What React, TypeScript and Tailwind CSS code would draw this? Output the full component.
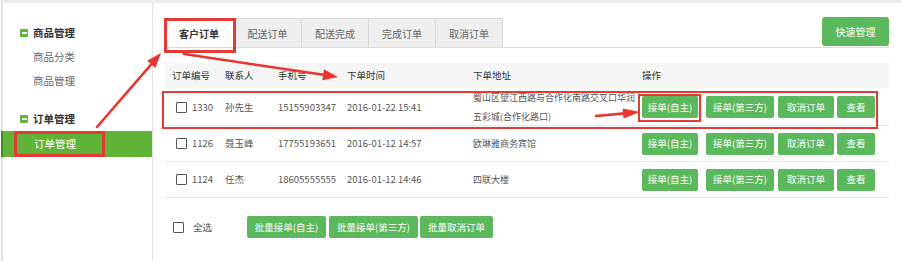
import React from 'react';

const RED = '#e8352e';

function Arrow({ x1, y1, x2, y2, head = 15, w = 11 }: { x1: number; y1: number; x2: number; y2: number; head?: number; w?: number }) {
  const dx = x2 - x1;
  const dy = y2 - y1;
  const L = Math.hypot(dx, dy);
  const ux = dx / L;
  const uy = dy / L;
  const bx = x2 - ux * head;
  const by = y2 - uy * head;
  const px = -uy;
  const py = ux;
  return (
    <g>
      <line x1={x1} y1={y1} x2={bx + ux * 2} y2={by + uy * 2} stroke={RED} strokeWidth={2.6} strokeLinecap="round" />
      <polygon
        points={`${x2},${y2} ${bx + (px * w) / 2},${by + (py * w) / 2} ${bx - (px * w) / 2},${by - (py * w) / 2}`}
        fill={RED}
      />
    </g>
  );
}

function Checkbox() {
  return <span className="block w-[11px] h-[11px] border border-[#555] bg-white rounded-[1px] shrink-0" />;
}

function GreenBtn({ children, w, className = '' }: { children: React.ReactNode; w: string; className?: string }) {
  return (
    <button
      className={`h-[22px] ${w} bg-[#5cb85c] text-white text-[9.5px] rounded-[2px] flex items-center justify-center shrink-0 ${className}`}
    >
      {children}
    </button>
  );
}

function GroupIcon() {
  return (
    <span className="w-[8px] h-[8px] bg-[#5fb336] rounded-[1px] flex items-center justify-center mr-[5px]">
      <span className="w-[5px] h-[1.5px] bg-white" />
    </span>
  );
}

type Row = { id: string; name: string; phone: string; time: string; addr: React.ReactNode; tall?: boolean; mark?: boolean };

const rows: Row[] = [
  {
    id: '1330',
    name: '孙先生',
    phone: '15155903347',
    time: '2016-01-22 15:41',
    addr: (
      <>
        蜀山区望江西路与合作化南路交叉口华润
        <br />
        五彩城(合作化路口)
      </>
    ),
    tall: true,
    mark: true,
  },
  { id: '1126', name: '聂玉峰', phone: '17755193651', time: '2016-01-12 14:57', addr: '欧琳雅商务宾馆' },
  { id: '1124', name: '任杰', phone: '18605555555', time: '2016-01-12 14:46', addr: '四联大楼' },
];

const cols = 'grid grid-cols-[53px_53px_69px_126px_169px_1fr] items-center';

export default function App() {
  return (
    <div className="relative w-[901px] h-[261px] bg-white overflow-hidden font-['Noto_Sans_CJK_SC','Noto_Sans',sans-serif] border-t-[3px] border-[#ebebeb] flex pl-[1px]">
      {/* Sidebar */}
      <aside className="w-[152px] shrink-0 border-l-2 border-r border-[#e3e3e3] pt-[18px] flex flex-col">
        <div className="h-[24px] flex items-center pl-[17px] text-[10.5px] font-bold text-[#333]">
          <GroupIcon />
          商品管理
        </div>
        <div className="h-[24px] flex items-center pl-[30px] text-[10.5px] text-[#666]">商品分类</div>
        <div className="h-[24px] flex items-center pl-[30px] text-[10.5px] text-[#666]">商品管理</div>
        <div className="h-[24px] mt-[14px] flex items-center pl-[17px] text-[10.5px] font-bold text-[#333]">
          <GroupIcon />
          订单管理
        </div>
        <div className="relative h-[26px] -ml-[2px] border-l-2 border-[#3f8a22] bg-[#5fb336] flex items-center pl-[31px] text-[10.5px] text-white">
          订单管理
          <div className="absolute left-[11px] top-0 w-[91px] h-[26px] border-[3px] border-[#e23b33]" />
        </div>
      </aside>

      {/* Main */}
      <main className="flex-1 pl-[11px] pr-[12px] pt-[14px] text-[9.5px]">
        <div className="flex items-end justify-between border-b border-[#dcdcdc]">
          <div className="flex">
            <div className="relative w-[69px] h-[29px] bg-white border-l border-t border-[#dcdcdc] flex items-center justify-center text-[10px] font-semibold text-[#333]">
              客户订单
              <div className="absolute -left-[1px] -top-[1px] w-[72px] h-[35px] border-[3px] border-[#e23b33] z-10" />
            </div>
            {['配送订单', '配送完成', '完成订单', '取消订单'].map((t, i) => (
              <div
                key={t}
                className={`${i === 0 ? 'w-[69px] border-l' : 'w-[67px]'} h-[29px] bg-[#eeeeee] border-t border-r border-[#d8d8d8] flex items-center justify-center text-[10px] text-[#666]`}
              >
                {t}
              </div>
            ))}
          </div>
          <button className="w-[67px] h-[29px] mb-[1px] bg-[#5cb85c] text-white text-[10px] rounded-[3px] flex items-center justify-center">
            快速管理
          </button>
        </div>

        {/* Table */}
        <div className="mt-[15px] w-[724px] ml-[1px]">
          <div className={`${cols} h-[25px] bg-[#f5f5f5] text-[#333]`}>
            <span className="pl-[7px]">订单编号</span>
            <span className="pl-[7px]">联系人</span>
            <span className="pl-[7px]">手机号</span>
            <span className="pl-[7px]">下单时间</span>
            <span className="pl-[7px]">下单地址</span>
            <span className="pl-[7px]">操作</span>
          </div>
          {rows.map((r) => (
            <div
              key={r.id}
              className={`${cols} relative ${r.tall ? 'h-[38px]' : 'h-[36px]'} border-b border-[#e6e6e6] text-[#555]`}
            >
              <span className="pl-[11px] flex items-center">
                <Checkbox />
                <span className="ml-[5px]">{r.id}</span>
              </span>
              <span className="pl-[7px]">{r.name}</span>
              <span className="pl-[7px]">{r.phone}</span>
              <span className="pl-[7px]">{r.time}</span>
              <span className="pl-[7px] text-[9px] leading-[19px] whitespace-nowrap">{r.addr}</span>
              <span className="pl-[7px] flex items-center">
                <span className="relative">
                  <GreenBtn w="w-[56px]">接单(自主)</GreenBtn>
                  {r.mark && <div className="absolute -left-[4px] -top-[2px] w-[63px] h-[28px] border-[2.5px] border-[#e23b33]" />}
                </span>
                <GreenBtn w="w-[68px]" className="ml-[8px]">
                  接单(第三方)
                </GreenBtn>
                <GreenBtn w="w-[56px]" className="ml-[4px]">
                  取消订单
                </GreenBtn>
                <GreenBtn w="w-[38px]" className="ml-[3px]">
                  查看
                </GreenBtn>
              </span>
              {r.mark && <div className="absolute -left-[3px] top-[3px] w-[716px] h-[38px] border-[2.5px] border-[#e23b33] pointer-events-none" />}
            </div>
          ))}

          <div className="mt-[18px] h-[22px] flex items-center text-[#555]">
            <span className="ml-[8px] flex items-center">
              <Checkbox />
            </span>
            <span className="ml-[9px]">全选</span>
            <GreenBtn w="w-[79px]" className="ml-[35px]">
              批量接单(自主)
            </GreenBtn>
            <GreenBtn w="w-[89px]" className="ml-[3px]">
              批量接单(第三方)
            </GreenBtn>
            <GreenBtn w="w-[73px]" className="ml-[2px]">
              批量取消订单
            </GreenBtn>
          </div>
        </div>
      </main>

      {/* Annotation arrows */}
      <svg className="absolute left-0 pointer-events-none" width={901} height={261} viewBox="0 -3 901 261" style={{ top: -3 }}>
        <Arrow x1={97} y1={124} x2={161} y2={50} />
        <Arrow x1={184} y1={51} x2={338} y2={74} />
        <Arrow x1={596} y1={113} x2={640} y2={109} head={17} w={10} />
      </svg>
    </div>
  );
}
